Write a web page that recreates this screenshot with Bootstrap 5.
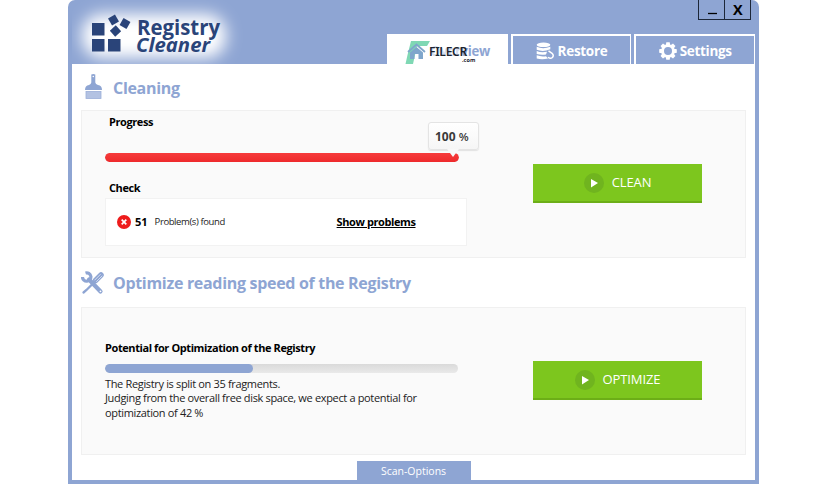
<!DOCTYPE html>
<html lang="en">
<head>
<meta charset="utf-8">
<title>Registry Cleaner</title>
<link href="https://cdn.jsdelivr.net/npm/bootstrap@5.3.0/dist/css/bootstrap.min.css" rel="stylesheet">
<style>
:root{--rc-blue:#8ea5d3;--rc-navy:#2a4479}
body{font-family:"Open Sans","Noto Sans",sans-serif;background:#fff;color:#222;font-size:11px;line-height:14px;overflow:hidden}
.app-window{width:691px;height:484px;margin-left:68px;background:var(--rc-blue);border-radius:7px 7px 0 0;padding:0 4px 4px;overflow:hidden}
.app-header{height:64px}
.brand{width:180px;height:64px;flex:none}
.tabs-area{width:368px}
.win-controls{height:19px;margin-right:4px}
.win-btn{width:27px;height:20px;border:1px solid #1d2738;border-top:0;background:transparent;color:#000;padding:0}
.win-btn + .win-btn{margin-left:-1px}
.app-tabs{gap:3px;height:30px}
.app-tab{flex:1 1 0;height:30px;padding:2px 0 0;border:1.5px solid #fff;border-width:2px 1px 0 2px;border-radius:0;color:#fff;font-weight:700;font-size:13.5px;letter-spacing:-.3px;white-space:nowrap;line-height:26px}
.app-tab.on{background:#fff;color:var(--rc-blue)}
.app-tab:hover{color:#fff}
.wm{left:14px;top:4px}
.app-body{background:#fff;height:416px;padding:0 9px}
.sect-title{color:var(--rc-blue);font-weight:700;font-size:16px;line-height:20px;margin:0;gap:9px;letter-spacing:-.31px}
.sect-title svg{flex:none}
.t1{height:46px;padding-top:1px}
.t2{height:49px}
.panel{background:#fafafa;border:1px solid #f0f0f0;width:665px}
.p1{height:148px;padding:4px 0 0 23px}
.p2{height:148px;padding:33px 0 0 23px}
.left-col{width:428px}
.lbl{font-weight:700;color:#000;letter-spacing:-.41px}
.bar-box{width:354px}
.bar{height:9px;border-radius:5px;background:#e4e4e4;--bs-progress-bar-transition:none}
.bar-red{background:linear-gradient(#f63b3b,#ee2a2c);border-radius:5px}
.bar-blue{background:var(--rc-blue);border-radius:5px}
.track{background:linear-gradient(#dadada,#e9e9e9);width:353px;margin-top:9px}
.tip{left:323px;top:-31px;width:51px;height:28px;border:1px solid #e4e4e4;border-radius:3px;background:linear-gradient(#fff,#f6f6f6);font-weight:700;font-size:12px;color:#3a3a3a;line-height:28px;padding-left:6px;box-shadow:0 1px 1px #e2e2e2}
.tip .pct{font-weight:600;font-size:11.5px}
.tip svg{left:18px;top:26px}
.l2{margin-top:19px}
.check-box{width:362px;height:48px;background:#fff;border:1px solid #f2f2f2;padding-left:11px;margin-top:3px}
.n51{margin-left:4px;letter-spacing:0}
.pf{margin-left:7px;font-size:9.5px;letter-spacing:-.4px;width:182px}
.desc{margin-top:4px;line-height:14.4px;letter-spacing:-.34px}
.act{width:169px;height:39px;background:#7dc61e;border:0;border-bottom:2px solid #6cae17;color:#fff;border-radius:0;font-size:13px;letter-spacing:-.1px;padding:0}
.act:hover{color:#fff;background:#7dc61e}
.p1 .act{margin-top:49px}
.p2 .act{margin-top:20px}
.scan{width:114px;height:19px;background:var(--rc-blue);color:#fff;font-size:10.5px;line-height:20px;border:0;border-radius:0;padding:0}
</style>
</head>
<body>
<main class="app-window">
  <header class="app-header d-flex justify-content-between">
    <svg class="brand" viewBox="72 0 180 64">
      <defs><filter id="glow" x="-40%" y="-60%" width="180%" height="220%"><feGaussianBlur stdDeviation="8"/></filter></defs>
      <rect x="82" y="14" width="144" height="44" rx="20" fill="#fff" filter="url(#glow)"/>
      <g fill="#2a4479">
        <rect x="92" y="23" width="12.500" height="12.500"/><rect x="92" y="39" width="12.500" height="12.500"/><rect x="108" y="39" width="12.500" height="12.500"/>
        <rect x="109.500" y="16" width="8" height="8" transform="rotate(-30 113.500 20)"/>
        <rect x="121" y="19.500" width="8" height="8" transform="rotate(30 125 23.500)"/>
        <rect x="111.500" y="27" width="8" height="8" transform="rotate(-42 115.500 31)"/>
      </g>
      <g fill="#2a4479" font-family="Open Sans" font-weight="700" font-size="21">
        <text x="137" y="35" textLength="83" lengthAdjust="spacingAndGlyphs">Registry</text>
        <text x="136" y="51.500" font-style="italic" font-size="19" textLength="74" lengthAdjust="spacingAndGlyphs">Cleaner</text>
      </g>
    </svg>
    <div class="tabs-area d-flex flex-column justify-content-between">
      <div class="win-controls d-flex justify-content-end">
        <button class="win-btn" aria-label="Minimize"><svg class="d-block" width="25" height="19"><path d="M9 13.500h9" stroke="#000" stroke-width="1.300"/></svg></button>
        <button class="win-btn" aria-label="Close"><svg class="d-block" width="25" height="19"><text x="8" y="15" font-family="Open Sans" font-weight="700" font-size="14.500">X</text></svg></button>
      </div>
      <nav class="app-tabs d-flex">
        <a class="app-tab on btn position-relative" aria-label="Overview">
          <svg class="wm position-absolute" width="92" height="26" viewBox="403 40 92 26">
            <path d="M411 41H430L427 46H417L413 64H405.500L407.500 55Z" fill="#7fd8b4"/>
            <path d="M408 52L416.500 44.500L425 52" fill="none" stroke="#7fa6cc" stroke-width="1.800"/><path d="M410 52.500L416.500 47L423 52.500V59H418.500V54H414.500V59H410Z" fill="#7fa6cc"/>
            <g font-family="Open Sans" font-weight="700"><text x="430" y="56" font-size="13.500" fill="#8ea5d3" textLength="60" lengthAdjust="spacingAndGlyphs"><tspan fill-opacity=".4">Over</tspan>view</text>
            <text x="429" y="56" font-size="12" font-family="Noto Sans" font-weight="600" fill="#1b2430" textLength="38" lengthAdjust="spacingAndGlyphs">FILECR</text>
            <text x="462" y="61.500" font-size="5.500" fill="#1b2430" textLength="13">.com</text></g>
          </svg>
        </a>
        <a class="app-tab btn d-flex justify-content-center align-items-center gap-1">
          <svg width="18" height="18" viewBox="0 0 18 18"><g fill="#fff"><ellipse cx="7.500" cy="2.800" rx="6.800" ry="2.300"/><path d="M.7 4.800Q7 7.500 14.300 4.800V7.300Q7 10.300.7 7.800ZM.7 9Q5 11 11 9.800L10 12.500Q5 13.300.7 12ZM.7 13.300Q5 15 10 14.200L12 16.500Q6 18 .7 16.500Z"/></g><path d="M12.500 8.800l3.600 2.500a2.800 2.800 0 1 1-4 3.800" fill="none" stroke="#fff" stroke-width="1.500"/></svg>
          <span>Restore</span>
        </a>
        <a class="app-tab btn d-flex justify-content-center align-items-center">
          <svg width="18" height="18" viewBox="-9 -9 18 18"><g fill="#fff"><path id="tooth" d="M-1.700-8.800H1.700L2.400-5H-2.400Z"/><use href="#tooth" transform="rotate(45)"/><use href="#tooth" transform="rotate(90)"/><use href="#tooth" transform="rotate(135)"/><use href="#tooth" transform="rotate(180)"/><use href="#tooth" transform="rotate(225)"/><use href="#tooth" transform="rotate(270)"/><use href="#tooth" transform="rotate(315)"/></g><circle r="5.400" fill="none" stroke="#fff" stroke-width="2.800"/></svg>
          <span style="margin-left:3px">Settings</span>
        </a>
      </nav>
    </div>
  </header>

  <section class="app-body d-flex flex-column">
    <h2 class="sect-title t1 d-flex align-items-center">
      <svg width="23" height="28" viewBox="81 73 23 28"><g fill="#8ea5d3"><path d="M91.300 73.500Q93.300 72.500 95.300 73.500V81.500Q95.500 83 98 84Q102 84.500 102 89H85Q85 84.500 89 84Q91 83 91.300 81.500Z"/></g><rect x="86" y="90.500" width="15" height="7" fill="#b3c2e2" stroke="#9bafd9" stroke-width=".8"/><circle cx="93.300" cy="75.500" r=".8" fill="#fff"/></svg>
      <span>Cleaning</span>
    </h2>
    <div class="panel p1 d-flex align-items-start">
      <div class="left-col">
        <div class="lbl ms-1">Progress</div>
        <div class="bar-box position-relative mt-4">
          <div class="progress bar"><div class="progress-bar bar-red" style="width:100%"></div></div>
          <div class="tip position-absolute">100 <span class="pct">%</span><svg class="position-absolute" width="14" height="9"><path d="M0 0H12L6 8Z" fill="#f8f8f8"/></svg></div>
        </div>
        <div class="lbl l2 ms-1">Check</div>
        <div class="check-box d-flex align-items-center">
          <svg width="14" height="14" viewBox="0 0 14 14"><circle cx="7" cy="7" r="7" fill="#ee1c1c"/><path d="M4.700 4.700l4.600 4.600M9.300 4.700l-4.600 4.600" stroke="#fff" stroke-width="1.700"/></svg>
          <span class="lbl n51">51</span><span class="pf">Problem(s) found</span>
          <a class="lbl text-decoration-underline">Show problems</a>
        </div>
      </div>
      <button class="act btn d-flex align-items-center justify-content-center"><svg width="20" height="20"><circle cx="10" cy="10" r="10" fill="#70b41f"/><path d="M7 6L14 10L7 14.500Z" fill="#fff"/></svg><span class="ms-2">CLEAN</span></button>
    </div>
    <h2 class="sect-title t2 d-flex align-items-center">
      <svg width="23" height="24" viewBox="0 0 23 24"><g fill="none" stroke="#8ea5d3" stroke-linecap="round"><path d="M8 8.500L19.500 20.500" stroke-width="4.200"/><path d="M4.500 2a4.200 4.200 0 1 1-3 4" stroke-width="3.200" stroke-linecap="butt"/><path d="M2.500 21.500l3-2.500L12 12.500" stroke-width="2.300"/><path d="M14.500 9.500L20 4" stroke-width="5.500"/><path d="M13.800 9L19.300 3.500M15.500 10.500L21 5" stroke="#e3e9f5" stroke-width=".8"/></g><circle cx="19.500" cy="20.300" r=".9" fill="#fff"/></svg>
      <span>Optimize reading speed of the Registry</span>
    </h2>
    <div class="panel p2 d-flex align-items-start">
      <div class="left-col">
        <div class="lbl">Potential for Optimization of the Registry</div>
        <div class="progress bar track"><div class="progress-bar bar-blue" style="width:42%"></div></div>
        <div class="desc">The Registry is split on 35 fragments.<br>Judging from the overall free disk space, we expect a potential for<br>optimization of 42 %</div>
      </div>
      <button class="act btn d-flex align-items-center justify-content-center"><svg width="20" height="20"><circle cx="10" cy="10" r="10" fill="#70b41f"/><path d="M7 6L14 10L7 14.500Z" fill="#fff"/></svg><span class="ms-2">OPTIMIZE</span></button>
    </div>
    <button class="scan btn mt-auto align-self-center">Scan-Options</button>
  </section>
</main>
<script src="https://cdn.jsdelivr.net/npm/bootstrap@5.3.0/dist/js/bootstrap.bundle.min.js"></script>
</body>
</html>
